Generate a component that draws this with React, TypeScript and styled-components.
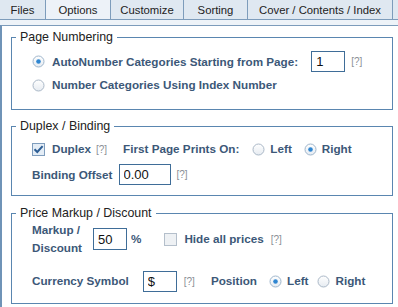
import React from 'react';
import styled, { createGlobalStyle } from 'styled-components';

const Global = createGlobalStyle`
  html, body { margin: 0; padding: 0; background: #fff; }
  body { font-family: "Liberation Sans", Arial, sans-serif; }
  * { box-sizing: border-box; }
`;

const Page = styled.div`
  width: 398px;
  height: 307px;
  overflow: hidden;
  background: #fff;
`;

const TabBar = styled.div`
  display: flex;
  height: 20px;
  background: #dfe8f1;
  border-bottom: 1px solid #7d9cbb;
`;

const Tab = styled.div<{ $w: number; $active?: boolean }>`
  width: ${(p) => p.$w}px;
  flex: none;
  border-right: 1px solid #7d9cbb;
  display: flex;
  align-items: center;
  justify-content: center;
  font-size: 11.3px;
  color: #222;
  background: ${(p) => (p.$active ? '#edf2f8' : '#dfe8f1')};
`;

const Band = styled.div`
  height: 5px;
  background: #eef3f8;
`;

const Panel = styled.div`
  border-top: 1px solid #7d9cbb;
  border-left: 2px solid #6f93b7;
  height: 282px;
  padding-top: 3px;
`;

const Group = styled.fieldset<{ $mt: number; $pb: number }>`
  margin: ${(p) => p.$mt}px 5px 0 9px;
  padding: 0 0 ${(p) => p.$pb}px 4px;
  border: 1px solid #5a86b0;
  min-width: 0;
`;

const Legend = styled.legend`
  padding: 0 4px;
  font-size: 12.4px;
  line-height: 16px;
  color: #222;
`;

const Body = styled.div`
  padding-left: 16px;
`;

const Row = styled.div<{ $h: number; $mt: number }>`
  display: flex;
  align-items: center;
  height: ${(p) => p.$h}px;
  margin-top: ${(p) => p.$mt}px;
`;

const Label = styled.span<{ $ml?: number; $lh?: number }>`
  margin-left: ${(p) => p.$ml ?? 0}px;
  font-size: 11.7px;
  font-weight: bold;
  color: #3c5878;
  line-height: ${(p) => p.$lh ?? 16}px;
  white-space: nowrap;
`;

const Help = styled.span<{ $ml: number }>`
  margin-left: ${(p) => p.$ml}px;
  font-size: 10px;
  color: #8a8f96;
  white-space: nowrap;
`;

const TextInput = styled.input<{ $ml: number; $w: number; $h: number }>`
  margin: 0 0 0 ${(p) => p.$ml}px;
  width: ${(p) => p.$w}px;
  height: ${(p) => p.$h}px;
  border: 1px solid #3f6d98;
  padding: 0 4px;
  font-family: "Liberation Sans", Arial, sans-serif;
  font-size: 13px;
  color: #111;
  background: #fff;
  outline: none;
  border-radius: 0;
`;

const IconBox = styled.span<{ $ml: number }>`
  margin-left: ${(p) => p.$ml}px;
  display: inline-flex;
  width: 13px;
  height: 13px;
  flex: none;
`;

const Radio = ({ checked, ml = 0 }: { checked?: boolean; ml?: number }) => (
  <IconBox $ml={ml}>
    <svg width="13" height="13" viewBox="0 0 13 13">
      <defs>
        <linearGradient id="rg" x1="0" y1="0" x2="0" y2="1">
          <stop offset="0" stopColor="#ffffff" />
          <stop offset="1" stopColor="#e6ebf1" />
        </linearGradient>
      </defs>
      <circle cx="6.5" cy="6.5" r="5.5" fill="url(#rg)" stroke={checked ? '#9fb6cc' : '#aab8c7'} strokeWidth="1" />
      {checked && <circle cx="6.5" cy="6.5" r="2.3" fill="#2f86d1" />}
    </svg>
  </IconBox>
);

const Check = ({ checked, ml = 0 }: { checked?: boolean; ml?: number }) => (
  <IconBox $ml={ml}>
    <svg width="13" height="13" viewBox="0 0 13 13">
      <rect x="0.5" y="0.5" width="12" height="12" fill={checked ? '#e4edf6' : '#eef1f4'} stroke={checked ? '#7f9dbd' : '#b4bfcb'} />
      {checked && <path d="M2.5 6.2 L5.3 9 L10.6 3.2" fill="none" stroke="#2c5d94" strokeWidth="2" />}
    </svg>
  </IconBox>
);

export default function App() {
  return (
    <Page>
      <Global />
      <TabBar>
        <Tab $w={46}>Files</Tab>
        <Tab $w={65} $active>Options</Tab>
        <Tab $w={73}>Customize</Tab>
        <Tab $w={64}>Sorting</Tab>
        <Tab $w={145}>Cover / Contents / Index</Tab>
      </TabBar>
      <Band />
      <Panel>
        <Group $mt={0} $pb={14}>
          <Legend>Page Numbering</Legend>
          <Body>
            <Row $h={23} $mt={5}>
              <Radio checked />
              <Label $ml={7}>AutoNumber Categories Starting from Page:</Label>
              <TextInput $ml={13} $w={34} $h={21} readOnly value="1" />
              <Help $ml={6}>[?]</Help>
            </Row>
            <Row $h={20} $mt={2}>
              <Radio />
              <Label $ml={7}>Number Categories Using Index Number</Label>
            </Row>
          </Body>
        </Group>
        <Group $mt={8} $pb={9}>
          <Legend>Duplex / Binding</Legend>
          <Body>
            <Row $h={20} $mt={5}>
              <Check checked />
              <Label $ml={7}>Duplex</Label>
              <Help $ml={5}>[?]</Help>
              <Label $ml={16}>First Page Prints On:</Label>
              <Radio ml={13} />
              <Label $ml={5}>Left</Label>
              <Radio ml={12} checked />
              <Label $ml={5}>Right</Label>
            </Row>
            <Row $h={23} $mt={4}>
              <Label>Binding Offset</Label>
              <TextInput $ml={6} $w={52} $h={21} readOnly value="0.00" />
              <Help $ml={6}>[?]</Help>
            </Row>
          </Body>
        </Group>
        <Group $mt={9} $pb={11}>
          <Legend>Price Markup / Discount</Legend>
          <Body>
            <Row $h={36} $mt={0}>
              <Label $lh={18}>
                Markup /<br />
                Discount
              </Label>
              <TextInput $ml={11} $w={34} $h={22} readOnly value="50" />
              <Label $ml={4}>%</Label>
              <Check ml={23} />
              <Label $ml={7}>Hide all prices</Label>
              <Help $ml={7}>[?]</Help>
            </Row>
            <Row $h={22} $mt={13}>
              <Label>Currency Symbol</Label>
              <TextInput $ml={14} $w={34} $h={21} readOnly value="$" />
              <Help $ml={7}>[?]</Help>
              <Label $ml={16}>Position</Label>
              <Radio ml={12} checked />
              <Label $ml={5}>Left</Label>
              <Radio ml={9} />
              <Label $ml={5}>Right</Label>
            </Row>
          </Body>
        </Group>
      </Panel>
    </Page>
  );
}
